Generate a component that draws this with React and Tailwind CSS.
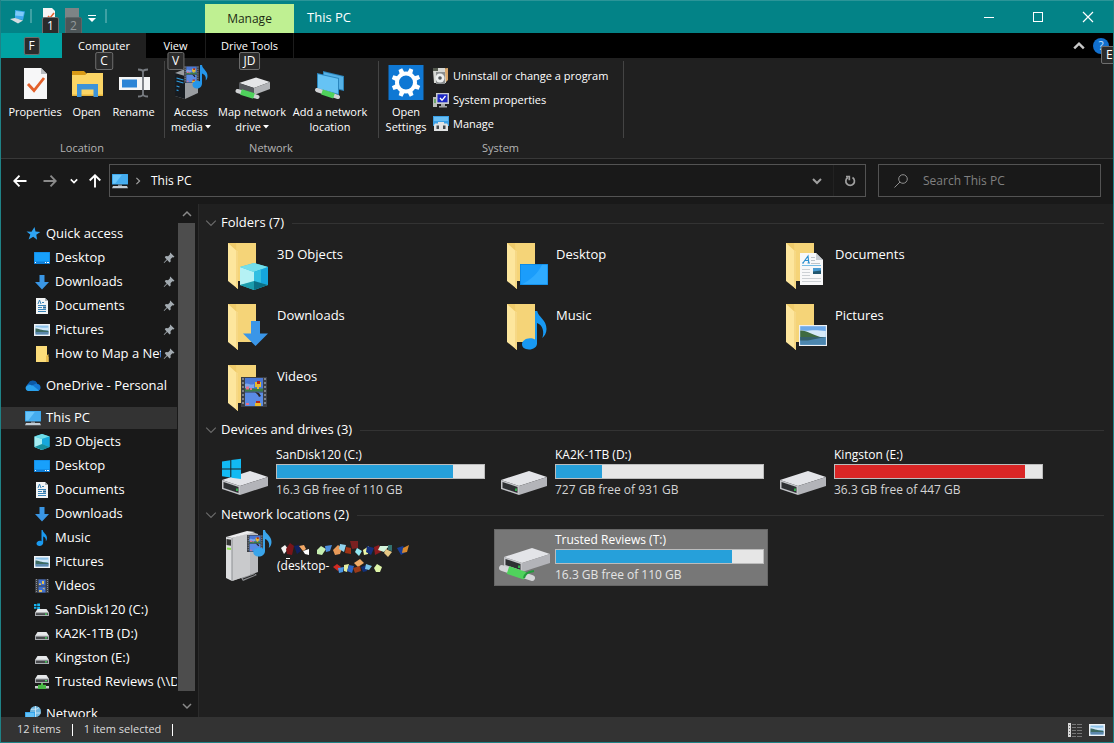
import { useState } from 'react';
import clsx from 'clsx';

function Chevron({ dir = 'down', className = 'w-2.5 h-2.5', width = 1.5 }) {
  const paths = {
    down: 'M1 3l4 4 4-4',
    up: 'M1 7l4-4 4 4',
    right: 'M3 1l4 4-4 4',
  };
  return (
    <svg viewBox="0 0 10 10" className={className} fill="none" stroke="currentColor" strokeWidth={width}>
      <path d={paths[dir]} />
    </svg>
  );
}

function Arrow({ turn = 0, className }) {
  return (
    <svg viewBox="0 0 14 14" className={clsx('w-3.5 h-3.5', className)} fill="none" stroke="currentColor" strokeWidth="1.9">
      <path transform={`rotate(${turn} 7 7)`} d="M13.5 7H1.5M6.5 1.7L1.3 7l5.2 5.3" />
    </svg>
  );
}

/* ---- small 16px icons ---- */

const small = {
  star: (
    <path d="M9.5 1l1 4.600 4.800.4-4 2.700.8 5-3.900-3-4.600 2.700 1.700-4.800L1.500 5.500l5 .2z" fill="#2ea3f2" />
  ),
  desktop: (
    <>
      <rect y="2" width="16" height="12" fill="#0f7fd8" />
      <path d="M.5 2.500h15v9H.5z" fill="#18a0fb" />
      <path d="M1 12.500h1M11 12.500h1M13 12.500h2" stroke="#fff" />
    </>
  ),
  download: <path d="M5.500 1h5v7H15l-7 7.500L1 8h4.500z" fill="#3a96e4" />,
  document: (
    <>
      <path d="M2 0h9l3 3v13H2z" fill="#f2f4f5" />
      <path d="M11 0v3h3z" fill="#a9b3ba" />
      <path d="M4 6l1.500-4L7 6M8 4.500h2M4 7.500h8M4 9.500h4M4 11.500h8M4 13.500h8" stroke="#3883b8" fill="none" />
      <path d="M9 8.500h3v2H9z" fill="#2a6d9c" />
    </>
  ),
  picture: (
    <>
      <path d="M0 2h16v12H0z" fill="#eef2f5" />
      <path d="M1.500 3.500h13v9h-13z" fill="#8ec3ea" />
      <path d="M1.500 5c5 .5 7 1 13 .5V8h-13z" fill="#d2e8f8" />
      <path d="M1.500 6.500c3 0 5 1.500 13 2.500v1.500h-13z" fill="#3d6b62" />
      <path d="M1.500 10h13v2.500h-13z" fill="#5b87ac" />
    </>
  ),
  folder: (
    <>
      <path d="M2 0h11v10l1.500 1v5H2z" fill="#fbdc7a" />
      <path d="M12 10l2.500-2v8H12z" fill="#e9bd4f" />
    </>
  ),
  cloud: (
    <>
      <path d="M4 13a4 4 0 0 1-.3-7.500A5 5 0 0 1 12.500 6 3.600 3.600 0 0 1 13 13z" fill="#1477d1" />
      <path d="M4 13a3 3 0 0 1-3-4.500l5-2.500 8 6.500-1 .5z" fill="#2aa1ec" />
      <path d="M3 5.800A5 5 0 0 1 12 5L7 7.500z" fill="#0c59a5" />
    </>
  ),
  pc: (
    <>
      <path d="M0 1h16v10.500H0z" fill="#2f9fe8" />
      <path d="M.7 1.700h14.600v9H.7z" fill="#6ac6fb" />
      <path d="M10 1.700h5.300v9H3z" fill="#45acef" />
      <path d="M6 11.500h4V13H6z" fill="#7f8b95" />
      <path d="M1 13h14l1 2.200H0z" fill="#c2ccd4" />
    </>
  ),
  cube: (
    <>
      <path d="M8 0l7.500 2.500V13L8 16 .5 13V2.500z" fill="#37c3dc" />
      <path d="M.5 2.500L8 5v11L.5 13z" fill="#a5ecf2" />
      <path d="M8 0l7.500 2.500L8 5 .5 2.500z" fill="#6fdce8" />
      <path d="M8 5l7.500-2.500V13L8 10z" fill="#16a8dc" />
      <path d="M8 10l7.500 3L8 16 .5 13z" fill="#17909f" />
    </>
  ),
  music: (
    <path d="M7.500 0h1.200c.3 3 4.300 4 4.300 8 0 1.500-.6 2.600-1.200 3.200.5-3-1-4.200-2.600-4.700v6.300C9.200 14.800 7.500 16 5.600 16S2.500 15 2.500 13.600s1.400-2.800 3.200-2.800c.7 0 1.300.1 1.800.4z" fill="#1a9af0" />
  ),
  video: (
    <>
      <path d="M1 1h14v14H1z" fill="#3b3d42" />
      <path d="M4.500 1.500h7v6h-7zM4.500 8.500h7v6h-7z" fill="#3f6fd0" />
      <path d="M5 5.500h2v1.500H5zM8 3h2v3H8zM5 12h3v2H5zM8.500 10h2v2z" fill="#e3c25a" />
      <path d="M2.500 1v14M13.500 1v14" stroke="#8b9096" strokeDasharray="1 1" />
    </>
  ),
  drive: (
    <>
      <path d="M3.500 6h9L15 10H1z" fill="#e6e8ea" />
      <path d="M1 9.700h14V14H1z" fill="#a9acb0" />
      <path d="M2 10.700h12V13H2z" fill="#47494c" />
      <path d="M11 11.200h2v1.200h-2z" fill="#3fdc5a" />
    </>
  ),
  system: (
    <>
      <path d="M3.500 7h9L15 10.700H1z" fill="#e6e8ea" />
      <path d="M1 10.200h14V14H1z" fill="#a9acb0" />
      <path d="M2 11.200h12v1.800H2z" fill="#47494c" />
      <path d="M11 11.500h2v1.200h-2z" fill="#3fdc5a" />
      <path d="M0 2h2.500v2H0zM3.200 1.500H6V4H3.200zM0 4.700h2.500v2H0zM3.200 4.700H6V7H3.200z" fill="#19b5f1" />
    </>
  ),
  netdrive: (
    <>
      <path d="M3.500 1h9L15 5H1z" fill="#e6e8ea" />
      <path d="M1 4.500h14V9H1z" fill="#a9acb0" />
      <path d="M2 5.500h12V8H2z" fill="#47494c" />
      <path d="M11 6h2v1.200h-2z" fill="#3fdc5a" />
      <path d="M7 9h2v2H7z" fill="#55c04f" />
      <path d="M1 12h14v2.500H1z" fill="#c9ccce" />
      <path d="M4 10.800h8v4.200H4z" fill="#47b744" />
    </>
  ),
  network: (
    <>
      <circle cx="10.500" cy="5.500" r="5.500" fill="#6fb6df" />
      <path d="M6 3.500c3-1 5 1 8-2M5.500 7h10.300M10.500 0v11" stroke="#d9eefa" strokeWidth=".8" fill="none" />
      <path d="M0 6h10v7H0z" fill="#2ea0ea" />
      <path d="M.8 6.800h8.400v5.400H.8z" fill="#62c1f8" />
      <path d="M2 14h6v1.500H2z" fill="#b8c4cc" />
    </>
  ),
};

function SmallIcon({ name }) {
  return (
    <svg viewBox="0 0 16 16" className="w-4 h-4 shrink-0">
      {small[name]}
    </svg>
  );
}

function Pin() {
  return (
    <svg viewBox="0 0 12 12" className="w-3 h-3 shrink-0">
      <path d="M7.200.5L11.500 4.800l-1.200.6-.9-.1-1.900 2 .2 2.200-1.100.9-2.400-2.300-3 3-.5-.5 2.900-3.100L1.800 5.200l1-1.100 2.300.2 1.900-2-.1-1z" fill="#a3abb1" />
    </svg>
  );
}

/* ---- large 48px icons ---- */

function FolderBase() {
  return (
    <>
      <path d="M7 1h28v38H7z" fill="#efcb6b" />
      <path d="M15 1h20v38H17z" fill="#f5d478" />
      <path d="M7 1l10 9v37L7 39z" fill="#fde69d" />
      <path d="M17 10v37l-2-1.600V8.200z" fill="#f6d886" />
    </>
  );
}

function DriveBody() {
  return (
    <>
      <path d="M1 32l28-9 18 6-28 9z" fill="#e3e4e8" />
      <path d="M19 38l28-9v9l-28 9z" fill="#b3b4b9" />
      <path d="M1 32l18 6v9L1 41z" fill="#c4c5c9" />
      <path d="M2.500 34l15 5v6l-15-5z" fill="#2e3033" />
      <path d="M16 40.500v2.500" stroke="#35d455" strokeWidth="1.500" />
    </>
  );
}

// two frames of film between perforated edges, scaled as a whole
function FilmStrip({ x, y, w, h }) {
  return (
    <svg x={x} y={y} width={w} height={h} viewBox="0 0 26 30" preserveAspectRatio="none">
      <path d="M0 0h26v30H0z" fill="#3c3f45" />
      <path d="M4 1h18v13.500H4z" fill="#4a78d6" />
      <path d="M4 15.500h18V29H4z" fill="#5a8be4" />
      <path d="M4 7c3-2 5 2 9 0v4H4z" fill="#7ea6ea" />
      <path d="M4 11.500h18v3H4z" fill="#3d7d45" />
      <path d="M5 9.500h3v3H5zM9 11h2v2H9zM5 26h3v2H5z" fill="#e2708d" />
      <path d="M14 5h6v5h-2v2h-2v-2h-2z" fill="#e9bb2e" />
      <path d="M16 4h3v3h-3zM15 24h4v3h-4z" fill="#b3271c" />
      <path d="M14 26h6v3h-6z" fill="#e9bb2e" />
      <path d="M14 15l4 1 2 3-2 1-1-2z" fill="#2a2420" />
      <path d="M2 1v28M24 1v28" stroke="#9599a0" strokeWidth="1.500" strokeDasharray="2 2" />
    </svg>
  );
}

const large = {
  cube: (
    <>
      <FolderBase />
      <path d="M19 25l14-4 14 4v18l-14 5-14-5z" fill="#3cc6dd" />
      <path d="M19 25l14 5v10l-14 3z" fill="#b5f1f4" />
      <path d="M19 25l14-4 14 4-14 5z" fill="#74dfea" />
      <path d="M33 30l14-5v18l-14-4z" fill="#15a6de" />
      <path d="M33 30l7-2.500v13.500l-7-2z" fill="#31bfe2" />
      <path d="M33 39l14 4-14 5z" fill="#0a6f86" />
      <path d="M33 39l-14 4 14 5z" fill="#1c9cac" />
    </>
  ),
  desktop: (
    <>
      <FolderBase />
      <path d="M20 22h28v21H20z" fill="#0a84dd" />
      <path d="M20.700 22.700h26.600v19.600H20.700z" fill="#1b9dfb" />
      <path d="M42 22.700h5.300v19.600H22c9-5 16-11 20-19.600z" fill="#2fabff" />
    </>
  ),
  document: (
    <>
      <FolderBase />
      <path d="M21 11h16l7 7v25H21z" fill="#f8f8f9" />
      <path d="M37 11v7h7z" fill="#c9cdd2" />
      <path d="M23 21h2M24 21l5-7 .8 7M25.500 18.500h4M28.500 21h2.500" stroke="#2a8fd0" strokeWidth="1.200" fill="none" />
      <path d="M32 15.500h4M32 18.500h4M32 21.500h9" stroke="#bfc4c9" />
      <path d="M23 23.500h19" stroke="#77bce4" />
      <path d="M23 27.500h8M23 30.500h8M23 33.500h8M23 36.500h19M23 39.500h19" stroke="#ccd0d4" />
      <path d="M34 26h8v6h-8z" fill="#4a9ad0" />
      <path d="M34 29.500l8-1v3.500h-8z" fill="#22566e" />
    </>
  ),
  download: (
    <>
      <FolderBase />
      <path d="M30 18h9v12.500h8L34.500 43 22 30.500h8z" fill="#3a96e8" />
    </>
  ),
  music: (
    <>
      <FolderBase />
      <path d="M35 8h2.200c.8 6 9.300 8.500 9.300 18 0 4-1.800 7-4.200 9 2.200-6 .5-13-5.300-15v20.500c0 3.500-3.600 6-8 6s-7-2.200-7-5.200 3.300-6 8-6c2 0 3.700.4 5 1.200z" fill="#1899f2" />
    </>
  ),
  picture: (
    <>
      <FolderBase />
      <path d="M20 22h28v21H20z" fill="#eef1f4" />
      <path d="M21.200 23.200h25.600v18.600H21.200z" fill="#6da9e8" />
      <path d="M21.200 27c8 2 9-1 25.600 1v6H21.200z" fill="#d6e9f8" />
      <path d="M21.200 27.500c6-.5 12 4 20 6.500H21.200z" fill="#3f6b40" />
      <path d="M21.200 34h25.600v7.800H21.200z" fill="#4c86ae" />
      <path d="M21.200 34h25.600l-18 3.500h-7.600z" fill="#35606b" />
    </>
  ),
  video: (
    <>
      <FolderBase />
      <FilmStrip x={20} y={13} w={26} h={30} />
    </>
  ),
  drive: <DriveBody />,
  system: (
    <>
      <DriveBody />
      <path d="M1 13.500l8.300-1.300v8.300H1zM10.300 12L20 10.800v9.700h-9.700zM1 21.500h8.300v8L1 28.200zM10.300 21.500H20V31l-9.700-1.300z" fill="#12baf3" />
    </>
  ),
  netdrive: (
    <>
      <g transform="translate(3 -8)">
        <DriveBody />
      </g>
      <path d="M2 35l30 10" stroke="#d4d5d8" strokeWidth="6" strokeLinecap="round" />
      <path d="M8 37l17 5.700" stroke="#4fd25c" strokeWidth="8" />
      <path d="M24 45c1-4 3-6 10-7" stroke="#239a3c" strokeWidth="2" fill="none" />
    </>
  ),
  server: (
    <>
      <path d="M20 45l13-5 3 2-14 6z" fill="#8b8d90" />
      <path d="M22 46l12-4.500" stroke="#222" />
      <path d="M11 5l20-6 6 2v38l-26 9z" fill="#b9babd" />
      <path d="M11 5l18-5v42l-18 6z" fill="#c9cacc" />
      <path d="M5 4l21-6 8 1L11 5z" fill="#ececee" />
      <path d="M5 4l6 1v43l-6-3z" fill="#dcdddf" />
      <path d="M5.500 6l4.500.8v6l-4.500-.8z" fill="#333" />
      <path d="M6 15.500l4 .5" stroke="#8be04a" strokeWidth="2" />
      <path d="M11 5v43" stroke="#8d8f92" />
      <FilmStrip x={26} y={2} w={16} h={17} />
      <path d="M42-3h2c.5 4 6.500 5.500 6.500 12 0 3-1.300 5-2.800 6 1.500-4.500-.5-8-3.700-9v12c0 3.500-3 5.500-6.200 5.500s-5.500-1.800-5.500-4.300 2.500-4.600 6-4.600c1.500 0 2.700.3 3.700.8z" fill="#3aa4ea" />
    </>
  ),
};

function LargeIcon({ name }) {
  return (
    <svg viewBox="0 0 48 48" className="w-12 h-12 shrink-0 overflow-visible">
      {large[name]}
    </svg>
  );
}

/* ---- ribbon icons, drawn on 36px ---- */

const ribbon = {
  properties: (
    <>
      <path d="M7 4h17l6 6v25H7z" fill="#f7f7f8" />
      <path d="M24 4v6h6z" fill="#b9bcc0" />
      <path d="M11 20l6 6.500L27 14" stroke="#e2602b" strokeWidth="2.800" fill="none" />
    </>
  ),
  open: (
    <>
      <path d="M3 7h12l2.500 2.500L15 13H3z" fill="#d99a16" />
      <path d="M3 11h13l2-2h16v23H3z" fill="#fbd565" />
      <path d="M3 30.500h31V32H3z" fill="#e6b53c" />
      <path d="M8 20h21v13h-4.500v-7.500h-12V33H8z" fill="#3d93d9" />
    </>
  ),
  rename: (
    <>
      <path d="M3 13h31v13H3z" fill="#f4f5f6" />
      <path d="M6 15.500h15v8H6z" fill="#2b84d6" />
      <path d="M22 5.500c3 0 5 .5 5 2.500v22c0 2-2 2.500-5 2.500M32 5.500c-3 0-5 .5-5 2.500v22c0 2 2 2.500 5 2.500" stroke="#777b80" strokeWidth="1.800" fill="none" />
    </>
  ),
  media: (
    <>
      <path d="M2 9l10-4h13v24l-13 6-10-3z" fill="#9a9da1" />
      <path d="M2 9l10 3v23L2 32z" fill="#171b20" />
      <path d="M3.500 14l7 2M3.500 17l7 2M3.500 22l3 1M3.500 26l2 .6" stroke="#2f9de0" strokeWidth="1.300" />
      <FilmStrip x={11} y={2} w={15} h={17} />
      <path d="M27 1h2c.4 4 5.500 5.500 5.500 11 0 2-.8 3.500-1.800 4.500.7-4-1-6-3.700-7v10c0 3-2.500 5-5 5s-4.500-1.600-4.500-3.800 2.200-4 5-4c1 0 1.900.2 2.500.6z" fill="#2596ea" />
    </>
  ),
  mapdrive: (
    <>
      <path d="M5 19l17-5.500L36 18l-16 6z" fill="#e4e5e7" />
      <path d="M20 24l16-6v7l-16 6z" fill="#b1b3b6" />
      <path d="M5 19l15 5v7L5 26z" fill="#55585c" />
      <path d="M3.500 27l20 6" stroke="#d0d2d4" strokeWidth="4" strokeLinecap="round" />
      <path d="M7 28l13 4" stroke="#4fd25c" strokeWidth="5.500" />
    </>
  ),
  location: (
    <>
      <path d="M11 7l21 5v15l-21-5z" fill="#2b83b8" />
      <path d="M12 8.300l19 4.500v13l-19-5z" fill="#55b1e6" />
      <path d="M5 9l22 5v17L5 25z" fill="#2a86be" />
      <path d="M6 10.300l20 4.500v14.900L6 24.300z" fill="#66c3f4" />
      <path d="M5 26l21 7" stroke="#d0d2d4" strokeWidth="4" strokeLinecap="round" />
      <path d="M10 28l12 3.800" stroke="#4fd25c" strokeWidth="5.500" />
    </>
  ),
  settings: (
    <>
      <path d="M.5 1h35v35H.5z" fill="#0f78d4" />
      <circle cx="18" cy="18.500" r="9" fill="none" stroke="#fff" strokeWidth="4" />
      {[0, 45, 90, 135, 180, 225, 270, 315].map((a) => (
        <path key={a} transform={`rotate(${a + 22} 18 18.500)`} d="M15.500 9l.5-5h4l.5 5z" fill="#fff" />
      ))}
    </>
  ),
};

const systemIcons = {
  uninstall: (
    <>
      <path d="M5 1l10-1v12l-3 3H5z" fill="#d9a66a" />
      <path d="M0 2l3-2h9v3l1 12H1z" fill="#d7d8d4" />
      <path d="M3 4h9v12H3z" fill="#8b8e8f" />
      <circle cx="7" cy="10" r="4.500" fill="#eceeee" />
      <circle cx="7" cy="10" r="1.800" fill="#55595c" />
      <path d="M0 0h5v3H0z" fill="#555b50" />
    </>
  ),
  properties: (
    <>
      <path d="M0 5h4v10H0z" fill="#b9bdb9" />
      <path d="M1 7h2v4H1z" fill="#6fa86b" />
      <path d="M3 1h13v11H3z" fill="#c8cace" />
      <path d="M4.500 2.300h10v8h-10z" fill="#1c27c4" />
      <path d="M7 6l2 2.300L12.500 4" stroke="#fff" strokeWidth="1.300" fill="none" />
      <path d="M8 12h4v2h2v1.500H6V14h2z" fill="#a4a7aa" />
    </>
  ),
  manage: (
    <>
      <path d="M0 0h16v10H0z" fill="#3aa0e6" />
      <path d="M1 1h14v4H1z" fill="#69bff5" />
      <path d="M5 6h6v1.500h3l1 1.500v6H1V9l1-1.500h3z" fill="#e0e2e3" />
      <path d="M3.500 9.500h2.500v3.500H3.500zM10 9.500h2.500v3.500H10z" fill="#43494e" />
    </>
  ),
};

function KeyTip({ children, className, dim }) {
  return (
    <span
      className={clsx(
        'absolute flex items-center justify-center h-[18px] min-w-3.5 px-1 rounded-xs border text-xs leading-4',
        dim ? 'bg-[#4c5557] border-[#5d6668] text-[#93999b]' : 'bg-[#2b2b2b] border-[#6e6e6e] text-white',
        className
      )}
    >
      {children}
    </span>
  );
}

function TitleBar() {
  return (
    <header className="flex h-[33px] shrink-0 bg-[#038387] border-t border-[#2b9598]">
      <div className="flex w-[204px] pl-[9px]">
        <svg viewBox="0 0 16 16" className="w-4 h-4 mt-2">
          <path d="M5 1l10 1.500-2 8.500-8-1.500z" fill="#3fa9ee" />
          <path d="M6 2l8 1.200-1 4-8-.7z" fill="#7fcbf8" />
          <path d="M0 10l5-1 8 2.500-5 3z" fill="#d5dbe0" />
        </svg>
        <span className="w-0.5 h-3.5 mt-2 ml-1 bg-[#3fa1a4]" />
        <button aria-label="Properties" className="relative w-3.5 h-8 ml-2.5">
          <svg viewBox="0 0 14 14" className="w-3.5 h-3.5 -mt-1">
            <path d="M1 0h9l3 3v11H1z" fill="#f4f4f4" />
            <path d="M6 8l2 2 4-5" stroke="#e2602b" strokeWidth="1.500" fill="none" />
          </svg>
          <KeyTip className="top-4 left-0">1</KeyTip>
        </button>
        <button aria-label="New folder" className="relative w-3.5 h-8 ml-[9px]">
          <svg viewBox="0 0 14 14" className="w-3.5 h-3.5 -mt-1">
            <path d="M0 0h14v14H0z" fill="#7d8486" />
          </svg>
          <KeyTip dim className="top-4 left-0">2</KeyTip>
        </button>
        <button aria-label="Customize Quick Access Toolbar" className="ml-2 pt-1 text-white">
          <svg viewBox="0 0 10 10" className="w-2.5 h-2.5">
            <path d="M1 1.500h8" stroke="#fff" />
            <path d="M1 4h8L5 8z" fill="#fff" />
          </svg>
        </button>
        <span className="w-0.5 h-3.5 mt-2 ml-2 bg-[#3fa1a4]" />
      </div>
      <button className="w-[89px] mt-[3px] bg-[#bff092] text-xs text-[#1c2b14]">Manage</button>
      <h1 className="ml-[13px] text-[13px] leading-8 text-white">This PC</h1>
      <div className="flex ml-auto text-white">
        <button aria-label="Minimize" className="grid place-items-center w-[49px]">
          <span className="w-2.5 h-px bg-white" />
        </button>
        <button aria-label="Maximize" className="grid place-items-center w-[50px]">
          <span className="w-2.5 h-2.5 border border-white" />
        </button>
        <button aria-label="Close" className="grid place-items-center w-[50px]">
          <svg viewBox="0 0 12 12" className="w-3 h-3" stroke="#fff" strokeWidth="1.200">
            <path d="M1 1l10 10M11 1L1 11" />
          </svg>
        </button>
      </div>
    </header>
  );
}

function Tabs() {
  return (
    <nav className="relative z-10 flex h-[25px] shrink-0 bg-black text-[11px] text-white">
      <button aria-label="File" className="relative w-[61px] bg-[#00a3a3]">
        <KeyTip className="top-1 left-1/2 -translate-x-1/2">F</KeyTip>
      </button>
      <button className="relative w-[84px] pt-0.5 bg-[#202020]">
        Computer
        <KeyTip className="top-[19px] left-1/2 -translate-x-1/2">C</KeyTip>
      </button>
      <button className="relative w-[59px] pt-0.5">
        View
        <KeyTip className="top-[19px] left-1/2 -translate-x-1/2">V</KeyTip>
      </button>
      <button className="relative w-[89px] pt-0.5 border-x border-[#1c1c1c]">
        Drive Tools
        <KeyTip className="top-[19px] left-1/2 -translate-x-1/2">JD</KeyTip>
      </button>
      <div className="flex items-center ml-auto">
        <button aria-label="Collapse the ribbon" className="text-[#c8c8c8]">
          <Chevron dir="up" className="w-3 h-3" width={2} />
        </button>
        <button aria-label="Help" className="relative w-5 h-4 ml-2">
          <span className="grid place-items-center w-4 h-4 rounded-full bg-[#1170cf] text-xs text-[#bfe0ff]">?</span>
          <KeyTip className="top-2 left-2">E</KeyTip>
        </button>
      </div>
    </nav>
  );
}

function RibbonButton({ icon, lines, menu, className }) {
  return (
    <button className={clsx('flex flex-col items-center shrink-0', className)}>
      <svg viewBox="0 0 36 36" className="w-9 h-9 mb-1">
        {ribbon[icon]}
      </svg>
      {lines.map((line, i) => (
        <span key={line} className="flex items-center leading-[15px] whitespace-nowrap">
          {line}
          {menu && i === lines.length - 1 && (
            <svg viewBox="0 0 6 4" className="w-1.5 h-1 ml-0.5">
              <path d="M0 0h6L3 3.500z" fill="#fff" />
            </svg>
          )}
        </span>
      ))}
    </button>
  );
}

function RibbonGroup({ label, className, children }) {
  return (
    <section className={clsx('relative flex flex-col h-full', className)}>
      <div className="flex flex-1 pt-1.5">{children}</div>
      <h2 className="h-5 pr-0.5 text-center leading-5 text-[#b4b4b4]">{label}</h2>
      <span className="absolute right-0 top-[3px] w-px h-[77px] bg-[#444]" />
    </section>
  );
}

function Ribbon() {
  const links = [
    ['uninstall', 'Uninstall or change a program'],
    ['properties', 'System properties'],
    ['manage', 'Manage'],
  ];
  return (
    <div className="flex h-[101px] shrink-0 bg-[#202020] border-b border-[#383838] text-[11px] text-white">
      <RibbonGroup label="Location" className="w-[164px]">
        <RibbonButton icon="properties" lines={['Properties']} className="w-[68px]" />
        <RibbonButton icon="open" lines={['Open']} className="w-[35px]" />
        <RibbonButton icon="rename" lines={['Rename']} className="w-[59px]" />
      </RibbonGroup>
      <RibbonGroup label="Network" className="w-[214px]">
        <RibbonButton icon="media" lines={['Access', 'media']} menu className="w-[52px]" />
        <RibbonButton icon="mapdrive" lines={['Map network', 'drive']} menu className="w-[70px]" />
        <RibbonButton icon="location" lines={['Add a network', 'location']} className="w-[86px]" />
      </RibbonGroup>
      <RibbonGroup label="System" className="w-[245px]">
        <RibbonButton icon="settings" lines={['Open', 'Settings']} className="w-[54px]" />
        <div className="flex flex-col">
          {links.map(([icon, text]) => (
            <button key={icon} className="flex items-center gap-1 h-6 whitespace-nowrap">
              <svg viewBox="0 0 16 16" className="w-4 h-4">
                {systemIcons[icon]}
              </svg>
              {text}
            </button>
          ))}
        </div>
      </RibbonGroup>
    </div>
  );
}

function AddressBar() {
  const [query, setQuery] = useState('');
  return (
    <div className="flex items-center h-[45px] shrink-0 pb-0.5 px-3 text-white">
      <button aria-label="Back">
        <Arrow />
      </button>
      <button aria-label="Forward" className="ml-4 text-[#8a8a8a]">
        <Arrow turn={180} />
      </button>
      <button aria-label="Recent locations" className="ml-[13px]">
        <Chevron className="w-2 h-2" width={2} />
      </button>
      <button aria-label="Up" className="ml-2.5">
        <Arrow turn={90} />
      </button>
      <div className="flex flex-1 items-center h-[33px] ml-[7px] pl-0.5 border border-[#535353]">
        <SmallIcon name="pc" />
        <span className="ml-1.5 text-[#a0a0a0]">
          <Chevron dir="right" className="w-2 h-2" />
        </span>
        <a href="#this-pc" className="ml-[9px] text-xs">This PC</a>
        <button aria-label="Previous locations" className="ml-auto mr-[11px] text-[#a0a0a0]">
          <Chevron width={2} />
        </button>
        <button aria-label="Refresh" className="grid place-items-center w-8 h-full border-l border-[#222] text-[#a0a0a0]">
          <svg viewBox="0 0 12 12" className="w-3 h-3" fill="none" stroke="currentColor" strokeWidth="1.700">
            <path d="M8.500 2.500a4.300 4.300 0 1 1-4.700 0M2 1.500h3.300v3.700" />
          </svg>
        </button>
      </div>
      <label className="flex items-center w-[223px] h-[33px] ml-3 pl-[15px] border border-[#535353]">
        <svg viewBox="0 0 14 14" className="w-3.5 h-3.5 shrink-0" fill="none" stroke="#8f8f8f">
          <circle cx="9" cy="5" r="4.300" />
          <path d="M6 8l-5.500 5.500" />
        </svg>
        <input
          aria-label="Search This PC"
          placeholder="Search This PC"
          value={query}
          onChange={(e) => setQuery(e.target.value)}
          className="w-full ml-[15px] bg-transparent text-xs outline-none placeholder:text-[#808080]"
        />
      </label>
    </div>
  );
}

const tree = [
  {
    icon: 'star',
    label: 'Quick access',
    items: [
      { icon: 'desktop', label: 'Desktop', pinned: true },
      { icon: 'download', label: 'Downloads', pinned: true },
      { icon: 'document', label: 'Documents', pinned: true },
      { icon: 'picture', label: 'Pictures', pinned: true },
      { icon: 'folder', label: 'How to Map a Network Drive', pinned: true },
    ],
  },
  { icon: 'cloud', label: 'OneDrive - Personal', items: [] },
  {
    icon: 'pc',
    label: 'This PC',
    active: true,
    items: [
      { icon: 'cube', label: '3D Objects' },
      { icon: 'desktop', label: 'Desktop' },
      { icon: 'document', label: 'Documents' },
      { icon: 'download', label: 'Downloads' },
      { icon: 'music', label: 'Music' },
      { icon: 'picture', label: 'Pictures' },
      { icon: 'video', label: 'Videos' },
      { icon: 'system', label: 'SanDisk120 (C:)' },
      { icon: 'drive', label: 'KA2K-1TB (D:)' },
      { icon: 'drive', label: 'Kingston (E:)' },
      { icon: 'netdrive', label: 'Trusted Reviews (\\\\DESKTOP)' },
    ],
  },
  { icon: 'network', label: 'Network', items: [] },
];

function Sidebar() {
  return (
    <aside className="flex w-[198px] shrink-0 border-r border-[#2b2b2b]">
      <nav className="flex flex-col gap-2 w-44 pt-[18px] overflow-hidden text-[13px] text-white">
        {tree.map((group) => (
          <div key={group.label} className="shrink-0">
            <a
              href="#"
              className={clsx('flex items-center gap-[5px] h-[22px] my-px pl-6', group.active && 'bg-[#333]')}
            >
              <SmallIcon name={group.icon} />
              {group.label}
            </a>
            {group.items.map((item) => (
              <a key={item.label} href="#" className="flex items-center h-6 pl-[33px]">
                <SmallIcon name={item.icon} />
                <span className="flex-1 ml-[5px] overflow-hidden whitespace-nowrap">{item.label}</span>
                {item.pinned && (
                  <span className="ml-0.5 mr-0.5">
                    <Pin />
                  </span>
                )}
              </a>
            ))}
          </div>
        ))}
      </nav>
      <div className="flex flex-col items-center w-[17px] ml-px text-[#8a8a8a]">
        <button aria-label="Scroll up" className="grid place-items-center w-full h-[19px] shrink-0">
          <Chevron dir="up" />
        </button>
        <span className="flex-1 w-full bg-[#4d4d4d]" />
        <button aria-label="Scroll down" className="grid place-items-center w-full h-[26px] pt-1 shrink-0">
          <Chevron />
        </button>
      </div>
    </aside>
  );
}

function GroupHeader({ label }) {
  return (
    <h2 className="flex items-center h-7 pl-1.5 pr-[9px] text-[13px] text-white">
      <span className="text-[#6a6a6a]">
        <Chevron width={1} className="w-3 h-3" />
      </span>
      <span className="ml-1 whitespace-nowrap">{label}</span>
      <span className="flex-1 h-px ml-2 bg-[#333]" />
    </h2>
  );
}

function TileGrid({ children }) {
  return <div className="grid grid-cols-[repeat(auto-fill,274px)] gap-x-[5px] gap-y-1 pl-4">{children}</div>;
}

function FolderTile({ icon, label }) {
  return (
    <a href="#" className="flex h-[57px] pt-[5px] pl-1.5 text-[13px]">
      <LargeIcon name={icon} />
      <span className="mt-1 ml-2 leading-4">{label}</span>
    </a>
  );
}

function DriveTile({ icon, label, free, used, full, selected }) {
  return (
    <a
      href="#"
      className={clsx('flex h-[57px] pl-1.5 text-xs', selected && 'bg-[#777] outline-1 -outline-offset-1 outline-[#666]')}
    >
      <span className="pt-1">
        <LargeIcon name={icon} />
      </span>
      <div className="w-[209px] pt-[3px] ml-[7px]">
        <p className="leading-4 text-white">{label}</p>
        <div
          role="progressbar"
          aria-label={label}
          aria-valuenow={used}
          className="h-[15px] mt-px border border-[#bcbcbc] bg-[#e6e6e6]"
        >
          <div className={clsx('h-full', full ? 'bg-[#da2626]' : 'bg-[#26a0da]')} style={{ width: `${used}%` }} />
        </div>
        <p className={clsx('mt-[3px] leading-4', selected ? 'text-[#e4e4e4]' : 'text-[#d4d4d4]')}>{free}</p>
      </div>
    </a>
  );
}

const scribble = [
  ['M2 7l4-3 3 4-4 5z', '#f4f4f4'],
  ['M7 8l4-6 4 3-2 9-5-1z', '#7a1518'],
  ['M15 5l5-1 2 6-4 3z', '#10215e'],
  ['M20 5l5-1 2 4-3 2z', '#f3a866'],
  ['M24 10l6-2v6l-4-1z', '#ffffff'],
  ['M38 9l4-4 5 3-4 6-5-1z', '#c7efb2'],
  ['M46 5l7-1-2 6-4 1z', '#4a8ddd'],
  ['M54 9l5-5 4 3-2 6-5 1z', '#e99a58'],
  ['M61 3l6 1-2 7-5-3z', '#8fd3ee'],
  ['M67 6l5 1v6l-6-1z', '#a03415'],
  ['M71 0h8v7l-6 1z', '#7a2020'],
  ['M78 7l5 3-3 5-4-4z', '#94e8f2'],
  ['M84 9l6-4-1 8-4 1z', '#ecf6a5'],
  ['M88 5l7 2-3 7-5-3z', '#14307c'],
  ['M95 6l5-2 2 7-6 3z', '#8d1b1f'],
  ['M101 5l9 0-5 6-6-2z', '#d4f5dc'],
  ['M107 8l6 3-4 5-4-4z', '#e6c885'],
  ['M109 4h4v6l-4-1z', '#34716f'],
  ['M118 7l6-2 3 6-5 3z', '#173c96'],
  ['M124 7l6-3-2 7-5 1z', '#d9892d'],
  ['M54 26l4-3 4 3-3 4z', '#cf2a22'],
  ['M59 27l6-1-1 5-4 1z', '#4a96e2'],
  ['M65 24l5-1-2 8-3-1z', '#e6f0a0'],
  ['M70 24l5 1-2 7-5-2z', '#2c66c6'],
  ['M75 22l6-4 4 4-6 4z', '#f0ac66'],
  ['M74 27l7-2 1 5-6 2z', '#9b3a19'],
  ['M82 26l5-2 1 6-4 1z', '#10307a'],
  ['M87 23l6 2-3 4-4-1z', '#7bc4e8'],
  ['M95 27l3-4 5 3-2 5-4 0z', '#dff5a9'],
];

function MediaTile() {
  return (
    <a href="#" className="flex h-[57px] pl-1.5 text-xs">
      <span className="pt-1">
        <LargeIcon name="server" />
      </span>
      <span className="relative ml-2 mt-[29px] leading-4 text-white">
        (desktop-
        <svg viewBox="0 0 132 34" className="absolute left-0.5 -top-[17px] w-[132px] h-[34px]">
          <path d="M7 17.500h4" stroke="#fff" />
          {scribble.map(([d, fill]) => (
            <path key={d} d={d} fill={fill} />
          ))}
        </svg>
      </span>
    </a>
  );
}

function Content() {
  return (
    <main className="flex-1 pt-[5px] overflow-hidden bg-[#202020] text-white">
      <GroupHeader label="Folders (7)" />
      <TileGrid>
        <FolderTile icon="cube" label="3D Objects" />
        <FolderTile icon="desktop" label="Desktop" />
        <FolderTile icon="document" label="Documents" />
        <FolderTile icon="download" label="Downloads" />
        <FolderTile icon="music" label="Music" />
        <FolderTile icon="picture" label="Pictures" />
        <FolderTile icon="video" label="Videos" />
      </TileGrid>
      <GroupHeader label="Devices and drives (3)" />
      <TileGrid>
        <DriveTile icon="system" label="SanDisk120 (C:)" free="16.3 GB free of 110 GB" used={85} />
        <DriveTile icon="drive" label="KA2K-1TB (D:)" free="727 GB free of 931 GB" used={22} />
        <DriveTile icon="drive" label="Kingston (E:)" free="36.3 GB free of 447 GB" used={92} full />
      </TileGrid>
      <GroupHeader label="Network locations (2)" />
      <TileGrid>
        <MediaTile />
        <DriveTile icon="netdrive" label="Trusted Reviews (T:)" free="16.3 GB free of 110 GB" used={85} selected />
      </TileGrid>
    </main>
  );
}

function StatusBar() {
  return (
    <footer className="flex items-center h-[25px] shrink-0 pl-4 pr-2 bg-[#333] text-[11px] text-[#dcdcdc]">
      <span>12 items</span>
      <span className="w-px h-3 mx-[11px] bg-white" />
      <span>1 item selected</span>
      <span className="w-px h-3 mx-[11px] bg-white" />
      <div className="flex items-center gap-[7px] ml-auto">
        <button aria-label="Details view">
          <svg viewBox="0 0 14 14" className="w-3.5 h-3.5">
            <path d="M0 0h3v14H0z" fill="#d8d8d8" />
            <path d="M1 2.500h1M1 5.500h1M1 8.500h1M1 11.500h1" stroke="#666" />
            <path d="M4 1.500h4M4 4.500h4M4 7.500h4M4 10.500h4M4 13.500h4M9 1.500h5M9 4.500h5M9 7.500h5M9 10.500h5M9 13.500h5" stroke="#777" />
          </svg>
        </button>
        <button aria-label="Large icons view">
          <SmallIcon name="picture" />
        </button>
      </div>
    </footer>
  );
}

export default function App() {
  return (
    <div className="flex flex-col h-screen overflow-hidden border-x border-b border-[#1f8286] bg-[#191919] font-['Open_Sans','Noto_Sans',sans-serif]">
      <TitleBar />
      <Tabs />
      <Ribbon />
      <AddressBar />
      <div className="flex flex-1 min-h-0">
        <Sidebar />
        <Content />
      </div>
      <StatusBar />
    </div>
  );
}
